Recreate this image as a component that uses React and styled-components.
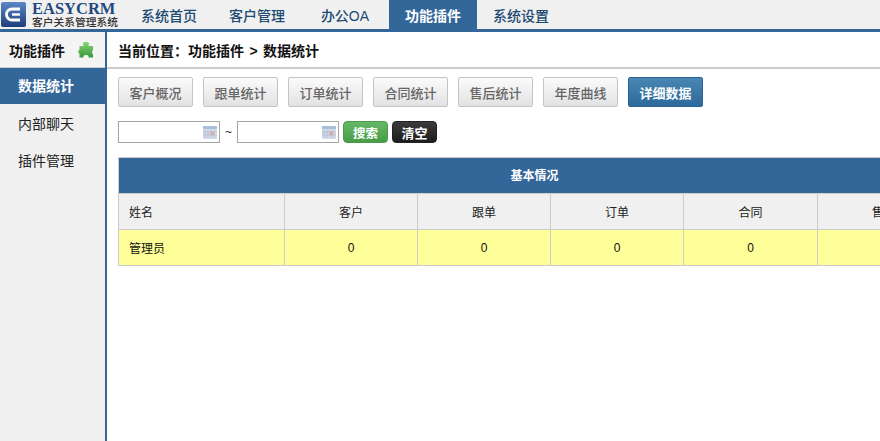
import React from "react";
import styled, { createGlobalStyle } from "styled-components";

const Global = createGlobalStyle`
  html, body { margin: 0; padding: 0; height: 100%; background: #fff; overflow: hidden; }
  #root { height: 100%; }
  * { box-sizing: border-box; }
  body { font-family: "Liberation Sans", "Noto Sans CJK SC", sans-serif; font-size: 12px; color: #222; }
`;

const Page = styled.div`
  width: 880px; height: 441px; display: flex; flex-direction: column; overflow: hidden;
`;
const TopBar = styled.header`
  height: 32px; flex: none; display: flex; background: #f0f0f0; border-bottom: 3px solid #336699;
`;
const Logo = styled.div`
  width: 125px; flex: none; display: flex; gap: 6px; padding: 2px 0 0 1px;
`;
const LogoText = styled.div`
  display: flex; flex-direction: column; width: 90px;
`;
const LogoName = styled.span`
  font-family: "Liberation Serif", serif; font-weight: 700; font-size: 16.5px; line-height: 13px;
  color: #24487f;
`;
const LogoSub = styled.span`
  font-size: 10.75px; font-weight: 500; line-height: 13px; margin-top: 1px; color: #333; white-space: nowrap;
`;
const Tab = styled.a`
  width: 88px; flex: none; height: 29px; display: flex; align-items: center; justify-content: center;
  font-size: 14px; font-weight: ${p => p.$active ? 700 : 500};
  color: ${p => p.$active ? "#fff" : "#1c4a70"};
  background: ${p => p.$active ? "#336699" : "transparent"};
`;
const Body = styled.div`
  flex: 1; display: flex; min-height: 0;
`;
const Side = styled.aside`
  width: 107px; flex: none; background: #f0f0f0; border-right: 2px solid #336699;
`;
const SideHead = styled.div`
  height: 36px; display: flex; align-items: center; justify-content: space-between; padding: 0 11px 0 9px;
  font-size: 14px; font-weight: 700; color: #111; border-bottom: 1px solid #ccc; background: #f4f4f4;
`;
const SideItem = styled.a`
  height: ${p => p.$active ? 36 : 37}px; display: flex; align-items: center; font-size: 14px;
  padding: ${p => p.$active ? "0 0 2px 18px" : "0 0 0 18px"};
  font-weight: ${p => p.$active ? 700 : 400};
  color: ${p => p.$active ? "#fff" : "#222"};
  background: ${p => p.$active ? "#336699" : "transparent"};
`;
const Main = styled.main`
  flex: 1; min-width: 0; overflow: hidden; display: flex; flex-direction: column;
`;
const Crumb = styled.div`
  height: 37px; flex: none; display: flex; align-items: center; padding: 0 0 0 11px; white-space: pre;
  font-size: 14px; font-weight: 700; color: #111; border-bottom: 2px solid #ccc; word-spacing: 1.5px;
`;
const Content = styled.div`
  padding: 8px 0 0 11px; display: flex; flex-direction: column;
`;
const BtnRow = styled.div`
  display: flex; gap: 10px;
`;
const TabBtn = styled.a`
  width: 75px; height: 30px; display: flex; align-items: center; justify-content: center; border-radius: 2px;
  font-size: 13px;
  border: 1px solid ${p => p.$active ? "#2a6496" : "#c4c4c4"};
  color: ${p => p.$active ? "#fff" : "#666"};
  font-weight: ${p => p.$active ? 700 : 500};
  background: ${p => p.$active ? "linear-gradient(#4a86b2, #2d6a9c)" : "linear-gradient(#fbfbfb, #e2e2e2)"};
`;
const FilterRow = styled.div`
  display: flex; align-items: center; margin-top: 14px; height: 22px;
`;
const DateBox = styled.div`
  width: 102px; height: 22px; border: 1px solid #a5a5a5; background: #fff; display: flex; justify-content: flex-end;
  align-items: center; padding-right: 2px;
`;
const Tilde = styled.span`
  width: 17px; text-align: center; font-size: 12px; color: #222;
`;
const ActBtn = styled.a`
  width: 45px; height: 22px; margin-left: 4px; border-radius: 4px; display: flex; align-items: center; justify-content: center;
  color: #fff; font-weight: 700; font-size: ${p => p.$size}px;
  background: ${p => p.$dark ? "linear-gradient(#3c3c3c, #1c1c1c)" : "linear-gradient(#66b866, #479d47)"};
  border: 1px solid ${p => p.$dark ? "#222" : "#4a9c4a"};
`;
const Table = styled.table`
  margin-top: 14px; border-collapse: collapse; table-layout: fixed; width: 832px; font-size: 12px; flex: none;
`;
const Th = styled.th`
  height: 36px; background: #336699; color: #fff; font-weight: 700; font-size: 12px; border: 1px solid #ccc; padding: 0 0 2px;
`;
const HeadCell = styled.td`
  height: 36px; background: #f0f0f0; border: 1px solid #ccc; color: #222; padding: ${p => p.$left ? "0 0 0 10px" : 0};
  text-align: ${p => p.$left ? "left" : "center"};
`;
const DataCell = styled.td`
  height: 36px; background: #ffff99; border: 1px solid #ccc; color: #111; padding: ${p => p.$left ? "0 0 0 10px" : 0};
  text-align: ${p => p.$left ? "left" : "center"};
`;
const Col = styled.col`
  width: ${p => p.$w}px;
`;

const LogoMark = () => (
  <svg width="25" height="25" viewBox="0 0 25 25">
    <defs>
      <linearGradient id="lg" x1="0" y1="0" x2="0" y2="1">
        <stop offset="0" stopColor="#5b87c4" />
        <stop offset="1" stopColor="#1f3f7c" />
      </linearGradient>
    </defs>
    <rect x="0" y="0" width="25" height="25" rx="2" fill="url(#lg)" />
    <path d="M19 7H11a5.500 5.500 0 0 0 0 11h8" fill="none" stroke="#fff" strokeWidth="2.800" />
    <path d="M11 12.500h8" fill="none" stroke="#fff" strokeWidth="2.400" />
  </svg>
);

const PuzzleIcon = () => (
  <svg width="16" height="18" viewBox="0 0 16 18">
    <defs>
      <linearGradient id="pz" x1="0" y1="0" x2="0" y2="1">
        <stop offset="0" stopColor="#86d676" />
        <stop offset="1" stopColor="#3c963c" />
      </linearGradient>
    </defs>
    <path d="M5 2.500C5 .5 11 .5 11 2.500c0 1-.5 1.500-.5 2.500H15v4.500c-1.500 0-1 4 0 3.500V16.500h-4.500c.5-1.500-.5-2.500-2.500-2.500s-3 1-2.500 2.500H1.500V12.500C0 13-.2 8.500 1.500 9V5h4C5.500 4 5 3.500 5 2.500z" fill="url(#pz)" />
  </svg>
);

const CalendarIcon = () => (
  <svg width="14" height="13" viewBox="0 0 14 13">
    <rect x="0" y="0" width="14" height="13" fill="#d4dcea" />
    <rect x="0" y="0" width="14" height="3" fill="#a9bcd8" />
    <path d="M2 4v8M5 4v8M8 4v8M11 4v8M0 6h14M0 9h14" stroke="#a9b8d0" strokeWidth="0.7" />
    <rect x="8" y="6" width="3" height="3" fill="#e8a090" />
  </svg>
);

const tabs = ["系统首页", "客户管理", "办公OA", "功能插件", "系统设置"];
const buttons = ["客户概况", "跟单统计", "订单统计", "合同统计", "售后统计", "年度曲线", "详细数据"];
const columns = [
  ["客户", 133], ["跟单", 133], ["订单", 133], ["合同", 134], ["售后", 133],
];

export default function App() {
  return (
    <Page>
      <Global />
      <TopBar>
        <Logo>
          <LogoMark />
          <LogoText>
            <LogoName>EASYCRM</LogoName>
            <LogoSub>客户关系管理系统</LogoSub>
          </LogoText>
        </Logo>
        {tabs.map((t, i) => <Tab key={t} $active={i === 3}>{t}</Tab>)}
      </TopBar>
      <Body>
        <Side>
          <SideHead>功能插件<PuzzleIcon /></SideHead>
          <SideItem $active>数据统计</SideItem>
          <SideItem>内部聊天</SideItem>
          <SideItem>插件管理</SideItem>
        </Side>
        <Main>
          <Crumb>当前位置：功能插件 &gt; 数据统计</Crumb>
          <Content>
            <BtnRow>
              {buttons.map((b, i) => <TabBtn key={b} $active={i === 6}>{b}</TabBtn>)}
            </BtnRow>
            <FilterRow>
              <DateBox><CalendarIcon /></DateBox>
              <Tilde>~</Tilde>
              <DateBox><CalendarIcon /></DateBox>
              <ActBtn $size={12.5}>搜索</ActBtn>
              <ActBtn $dark $size={13}>清空</ActBtn>
            </FilterRow>
            <Table>
              <colgroup>
                <Col $w={166} />
                {columns.map(([c, w]) => <Col key={c} $w={w} />)}
              </colgroup>
              <thead>
                <tr><Th colSpan={6}>基本情况</Th></tr>
              </thead>
              <tbody>
                <tr>
                  <HeadCell $left>姓名</HeadCell>
                  {columns.map(([c]) => <HeadCell key={c}>{c}</HeadCell>)}
                </tr>
                <tr>
                  <DataCell $left>管理员</DataCell>
                  {columns.map(([c]) => <DataCell key={c}>0</DataCell>)}
                </tr>
              </tbody>
            </Table>
          </Content>
        </Main>
      </Body>
    </Page>
  );
}
